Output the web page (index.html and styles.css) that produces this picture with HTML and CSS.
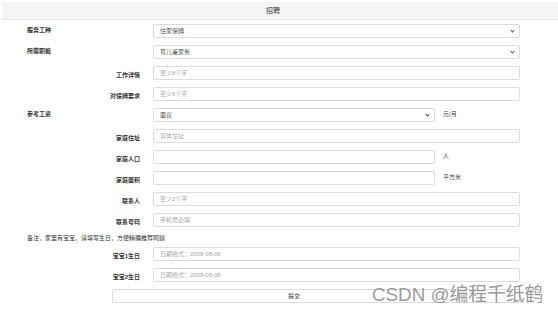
FILE: index.html
```html
<!DOCTYPE html>
<html lang="zh-CN">
<head>
    <meta charset="UTF-8">
    <title>招聘</title>
    <link rel="stylesheet" href="styles.css">
</head>
<body>
<div class="head">招聘</div>
<form class="form">
    <div class="row">
        <label class="lbl l">服务工种</label>
        <div class="ctl sel">住家保姆</div>
    </div>
    <div class="row">
        <label class="lbl l">所需职能</label>
        <div class="ctl sel">育儿兼家务</div>
    </div>
    <div class="row">
        <label class="lbl r">工作详情</label>
        <div class="ctl ph">至少8个字</div>
    </div>
    <div class="row">
        <label class="lbl r">对保姆要求</label>
        <div class="ctl ph">至少8个字</div>
    </div>
    <div class="row">
        <label class="lbl l">参考工资</label>
        <div class="ctl sel short">面议</div>
        <span class="unit">元/月</span>
    </div>
    <div class="row">
        <label class="lbl r">家庭住址</label>
        <div class="ctl ph">具体住址</div>
    </div>
    <div class="row">
        <label class="lbl r">家庭人口</label>
        <div class="ctl short"></div>
        <span class="unit">人</span>
    </div>
    <div class="row">
        <label class="lbl r">家庭面积</label>
        <div class="ctl short"></div>
        <span class="unit">平方米</span>
    </div>
    <div class="row">
        <label class="lbl r">联系人</label>
        <div class="ctl ph">至少2个字</div>
    </div>
    <div class="row">
        <label class="lbl r">联系号码</label>
        <div class="ctl ph">手机号必填</div>
    </div>
    <p class="note">备注，家里有宝宝，请填写生日，方便精确推荐阿姨</p>
    <div class="row">
        <label class="lbl r">宝宝1生日</label>
        <div class="ctl ph">日期格式：2008-08-08</div>
    </div>
    <div class="row">
        <label class="lbl r">宝宝2生日</label>
        <div class="ctl ph">日期格式：2008-08-08</div>
    </div>
    <div class="btn-row">
        <div class="btn">提交</div>
    </div>
</form>
<div class="mark">CSDN @编程千纸鹤</div>
</body>
</html>
```

FILE: styles.css
```css
* {
    margin: 0;
    padding: 0;
    box-sizing: border-box;
}

body {
    width: 558px;
    height: 314px;
    padding-top: 2px;
    background-color: #fff;
    color: #333;
    font-family: "Liberation Sans", "Noto Sans CJK SC", sans-serif;
    font-size: 6px;
    position: relative;
    overflow: hidden;
}

.head {
    margin-left: 2px;
    height: 18px;
    line-height: 17px;
    background-color: #f5f5f5;
    border-bottom: 1px solid #e6e6e6;
    text-align: center;
    padding-right: 14px;
    font-size: 7px;
    color: #333;
}

.form {
    padding-top: 4px;
}

.row {
    display: flex;
    height: 14px;
    margin-bottom: 7px;
    padding-left: 27px;
}

.lbl {
    width: 113px;
    margin-right: 13px;
    font-weight: bold;
    line-height: 8px;
    color: #333;
}

.lbl.l {
    text-align: left;
    padding-top: 2px;
}

.lbl.r {
    text-align: right;
    padding-top: 5px;
}

.ctl {
    position: relative;
    width: 367px;
    height: 14px;
    border: 1px solid #dcdcdc;
    border-radius: 2px;
    padding-left: 6px;
    line-height: 12px;
    color: #555;
    background-color: #fff;
}

.ctl.short {
    width: 282px;
}

.ctl.ph {
    color: #aaa;
}

/* 下拉箭头 */
.sel::after {
    content: "";
    position: absolute;
    right: 5px;
    top: 4px;
    width: 2px;
    height: 2px;
    border-right: 1px solid #555;
    border-bottom: 1px solid #555;
    transform: rotate(45deg);
}

.unit {
    margin-left: 8px;
    padding-top: 2px;
    line-height: 8px;
    color: #444;
}

.note {
    padding-left: 27px;
    line-height: 8px;
    margin-bottom: 5px;
    color: #333;
}

.btn-row {
    padding-left: 112px;
}

.btn {
    width: 408px;
    height: 14px;
    border: 1px solid #dcdcdc;
    border-radius: 2px;
    line-height: 12px;
    text-align: center;
    padding-right: 44px;
    color: #333;
}

.mark {
    position: absolute;
    left: 372px;
    top: 284px;
    font-size: 18.8px;
    line-height: 22px;
    color: #9a9a9a;
    white-space: nowrap;
}
```
